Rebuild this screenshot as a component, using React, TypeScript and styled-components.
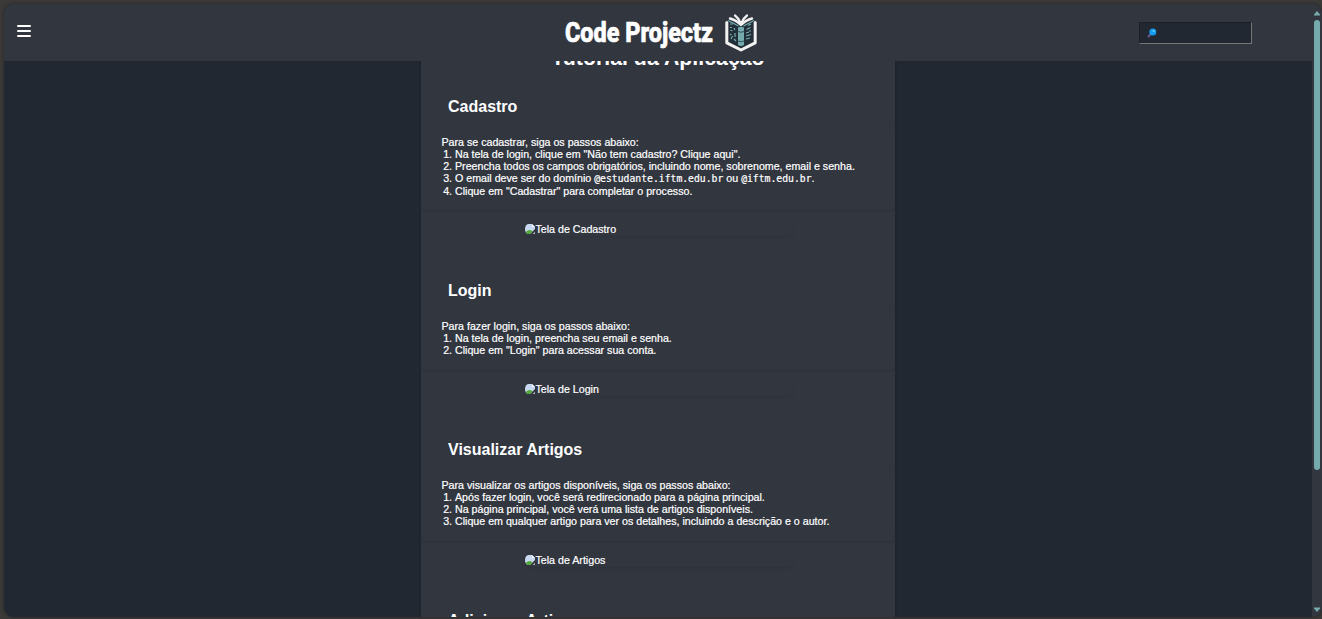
import React from "react";
import styled, { createGlobalStyle } from "styled-components";

const Global = createGlobalStyle`
  *{box-sizing:border-box}
  html,body{margin:0;padding:0;height:100%;overflow:hidden;background:#3b3a39}
  body{font-family:"Liberation Sans",Arial,sans-serif;color:#fff}
`;
const Page = styled.div`height:619px;width:1322px;padding:4px 0 2px 4px;`;
const Frame = styled.div`
  height:613px;display:flex;border-radius:9px;overflow:hidden;background:#222831;
  box-shadow:0 0 4px rgba(0,0,0,.35);
`;
const Main = styled.div`flex:1;display:flex;flex-direction:column;min-width:0;`;
const Header = styled.header`
  height:57px;flex:none;background:#32363f;display:grid;
  grid-template-columns:1fr 196px 1fr;align-items:center;
`;
const MenuButton = styled.button`
  width:14px;height:12px;margin:-3px 0 0 13px;padding:0;border:0;background:none;
  display:flex;flex-direction:column;justify-content:space-between;
`;
const Bar = styled.span`height:2px;width:14px;background:#fff;border-radius:1px;`;
const Logo = styled.svg`width:200px;height:48px;display:block;margin-top:-1px;`;
const Search = styled.div`
  justify-self:end;margin:1px 60px 0 0;width:113px;height:22px;background:#222831;
  border:1px solid;border-color:#1d2025 #767676 #767676 #1d2025;
  display:flex;align-items:center;padding-left:7px;
`;
const Body = styled.div`flex:1;overflow:hidden;display:flex;justify-content:center;min-height:0;`;
const Column = styled.main`width:474px;flex:none;background:#32363f;box-shadow:0 0 3px rgba(0,0,0,.2);overflow:hidden;`;
const Title = styled.h1`
  margin:-15px 0 0;height:24px;line-height:24px;font-size:21.33px;text-align:center;white-space:nowrap;
`;
const Sections = styled.div`padding-top:27px;`;
const Section = styled.section<{ $h: number }>`height:${p => p.$h}px;`;
const Heading = styled.h2`margin:0;height:36px;line-height:20px;font-size:16px;padding-left:27px;`;
const Card = styled.div<{ $h: number }>`
  height:${p => p.$h}px;margin-top:-8px;padding:11px 0 0 20.5px;border-radius:6px;
  box-shadow:0 1px 3px rgba(0,0,0,.12);font-size:10.67px;line-height:12px;white-space:nowrap;
  -webkit-text-stroke:.2px #fff;
`;
const Text = styled.p`margin:0;`;
const List = styled.ol`margin:0;padding:0 0 0 13.5px;`;
const Code = styled.code`font-family:"DejaVu Sans Mono",monospace;font-size:9.75px;`;
const Shot = styled.div`
  width:268px;height:14px;margin:12px 0 0 104px;border-radius:6px;
  box-shadow:0 1px 3px rgba(0,0,0,.1);display:flex;align-items:center;
  font-size:10.67px;line-height:12px;-webkit-text-stroke:.2px #fff;
`;
const Track = styled.div`
  width:10px;flex:none;background:#32363f;display:flex;flex-direction:column;align-items:center;
  padding:6px 0 4px;
`;
const Thumb = styled.div`width:6px;height:450px;margin-top:4px;border-radius:3px;background:#76abae;`;
const Arrow = styled.svg<{ $end?: boolean }>`width:6px;height:6px;flex:none;margin-top:${p => (p.$end ? "auto" : "0")};`;

const Broken = () => (
  <svg width="10.5" height="12" viewBox="0 0 10.5 12">
    <path d="M3 1H7L10 4V6L5 11H3Q0 10 0 6Q0 2 3 1Z" fill="#c8d8f0" />
    <path d="M7 1L10 4H7Z" fill="#fff" />
    <path d="M.7 9Q4 5.5 7.5 8.2L5 11H3Q1.2 10.5 .7 9Z" fill="#53a83c" />
    <path d="M7.5 11L10 8.7V11Z" fill="#aab0b8" />
  </svg>
);

const Book = () => (
  <g>
    <path d="M169 11L181 18L193 11V34L181 40L169 34Z" fill="#222f39" />
    <path d="M166.8 14.5V34.8L181 42L195.2 34.8V14.5" fill="none" stroke="#f2f2f2" strokeWidth="3" strokeLinejoin="round" strokeLinecap="round" />
    <path d="M168 12.5L178.5 18M194 12.5L183.5 18" stroke="#76abae" strokeWidth="1.2" />
    <path d="M181 17Q176 12 170 10.5M181 17Q186 12 192 10.5" fill="none" stroke="#f2f2f2" strokeWidth="2.4" strokeLinecap="round" />
    <path d="M180.5 15Q178.5 10 175 7.5M181.5 15Q183.5 10 187 7.5" fill="none" stroke="#f2f2f2" strokeWidth="2.2" strokeLinecap="round" />
    <path d="M178 19.5Q181 18 184 19.5V37Q181 39 178 37Z" fill="#76abae" />
    <path d="M178 23.5Q181 25 184 23.5M178 33Q181 34.5 184 33" fill="none" stroke="#35525c" />
    <path d="M170 16h3M170 19.5h2M174.5 20v2M170.5 22.5h2M170 26l1.5 1M175 25v4M172.5 28l-1.5 3M174 31l2 2M191 16l-3 1.5M190.5 19.5l-4 2M191 23h-2M186 25l3-1M191 26.5l-5 1.5M186 31l4-1" stroke="#76abae" strokeWidth="1.2" />
  </g>
);

type Part = { title: string; intro: string; steps: React.ReactNode[]; alt: string; height: number; card: number };
const parts: Part[] = [
  {
    title: "Cadastro", intro: "Para se cadastrar, siga os passos abaixo:", alt: "Tela de Cadastro", height: 184, card: 85,
    steps: [
      'Na tela de login, clique em "Não tem cadastro? Clique aqui".',
      "Preencha todos os campos obrigatórios, incluindo nome, sobrenome, email e senha.",
      <>O email deve ser do domínio <Code>@estudante.iftm.edu.br</Code> ou <Code>@iftm.edu.br</Code>.</>,
      'Clique em "Cadastrar" para completar o processo.',
    ],
  },
  {
    title: "Login", intro: "Para fazer login, siga os passos abaixo:", alt: "Tela de Login", height: 159, card: 61,
    steps: ["Na tela de login, preencha seu email e senha.", 'Clique em "Login" para acessar sua conta.'],
  },
  {
    title: "Visualizar Artigos", intro: "Para visualizar os artigos disponíveis, siga os passos abaixo:", alt: "Tela de Artigos", height: 171, card: 73,
    steps: [
      "Após fazer login, você será redirecionado para a página principal.",
      "Na página principal, você verá uma lista de artigos disponíveis.",
      "Clique em qualquer artigo para ver os detalhes, incluindo a descrição e o autor.",
    ],
  },
];

export default function App() {
  return (
    <Page>
      <Global />
      <Frame>
        <Main>
          <Header>
            <MenuButton aria-label="Menu"><Bar /><Bar /><Bar /></MenuButton>
            <Logo viewBox="0 0 200 48">
              <text x="5" y="33.5" fontFamily="Roboto, sans-serif" fontWeight="800" fontSize="27.5" textLength="148" lengthAdjust="spacingAndGlyphs" fill="#fff" stroke="#fff" strokeWidth=".7" strokeLinejoin="round">Code Projectz</text>
              <Book />
            </Logo>
            <Search>
              <svg width="10" height="10" viewBox="0 0 10 10">
                <path d="M1.5 8.5L4 6" stroke="#6b5690" strokeWidth="2" strokeLinecap="round" />
                <circle cx="5.8" cy="4" r="3.5" fill="#149cf0" />
                <circle cx="6.6" cy="3" r="1" fill="#76d5ff" />
              </svg>
            </Search>
          </Header>
          <Body>
            <Column>
              <Title>Tutorial da Aplicação</Title>
              <Sections>
                {parts.map(p => (
                  <Section key={p.title} $h={p.height}>
                    <Heading>{p.title}</Heading>
                    <Card $h={p.card}>
                      <Text>{p.intro}</Text>
                      <List>{p.steps.map((s, i) => <li key={i}>{s}</li>)}</List>
                    </Card>
                    <Shot><Broken />{p.alt}</Shot>
                  </Section>
                ))}
                <Heading>Adicionar Artigos</Heading>
              </Sections>
            </Column>
          </Body>
        </Main>
        <Track>
          <Arrow viewBox="0 0 6 6"><path d="M0 5.5V4.5L3 1L6 4.5V5.5Z" fill="#76abae" /></Arrow>
          <Thumb />
          <Arrow $end viewBox="0 0 6 6"><path d="M0 .5V1.5L3 5L6 1.5V.5Z" fill="#76abae" /></Arrow>
        </Track>
      </Frame>
    </Page>
  );
}
